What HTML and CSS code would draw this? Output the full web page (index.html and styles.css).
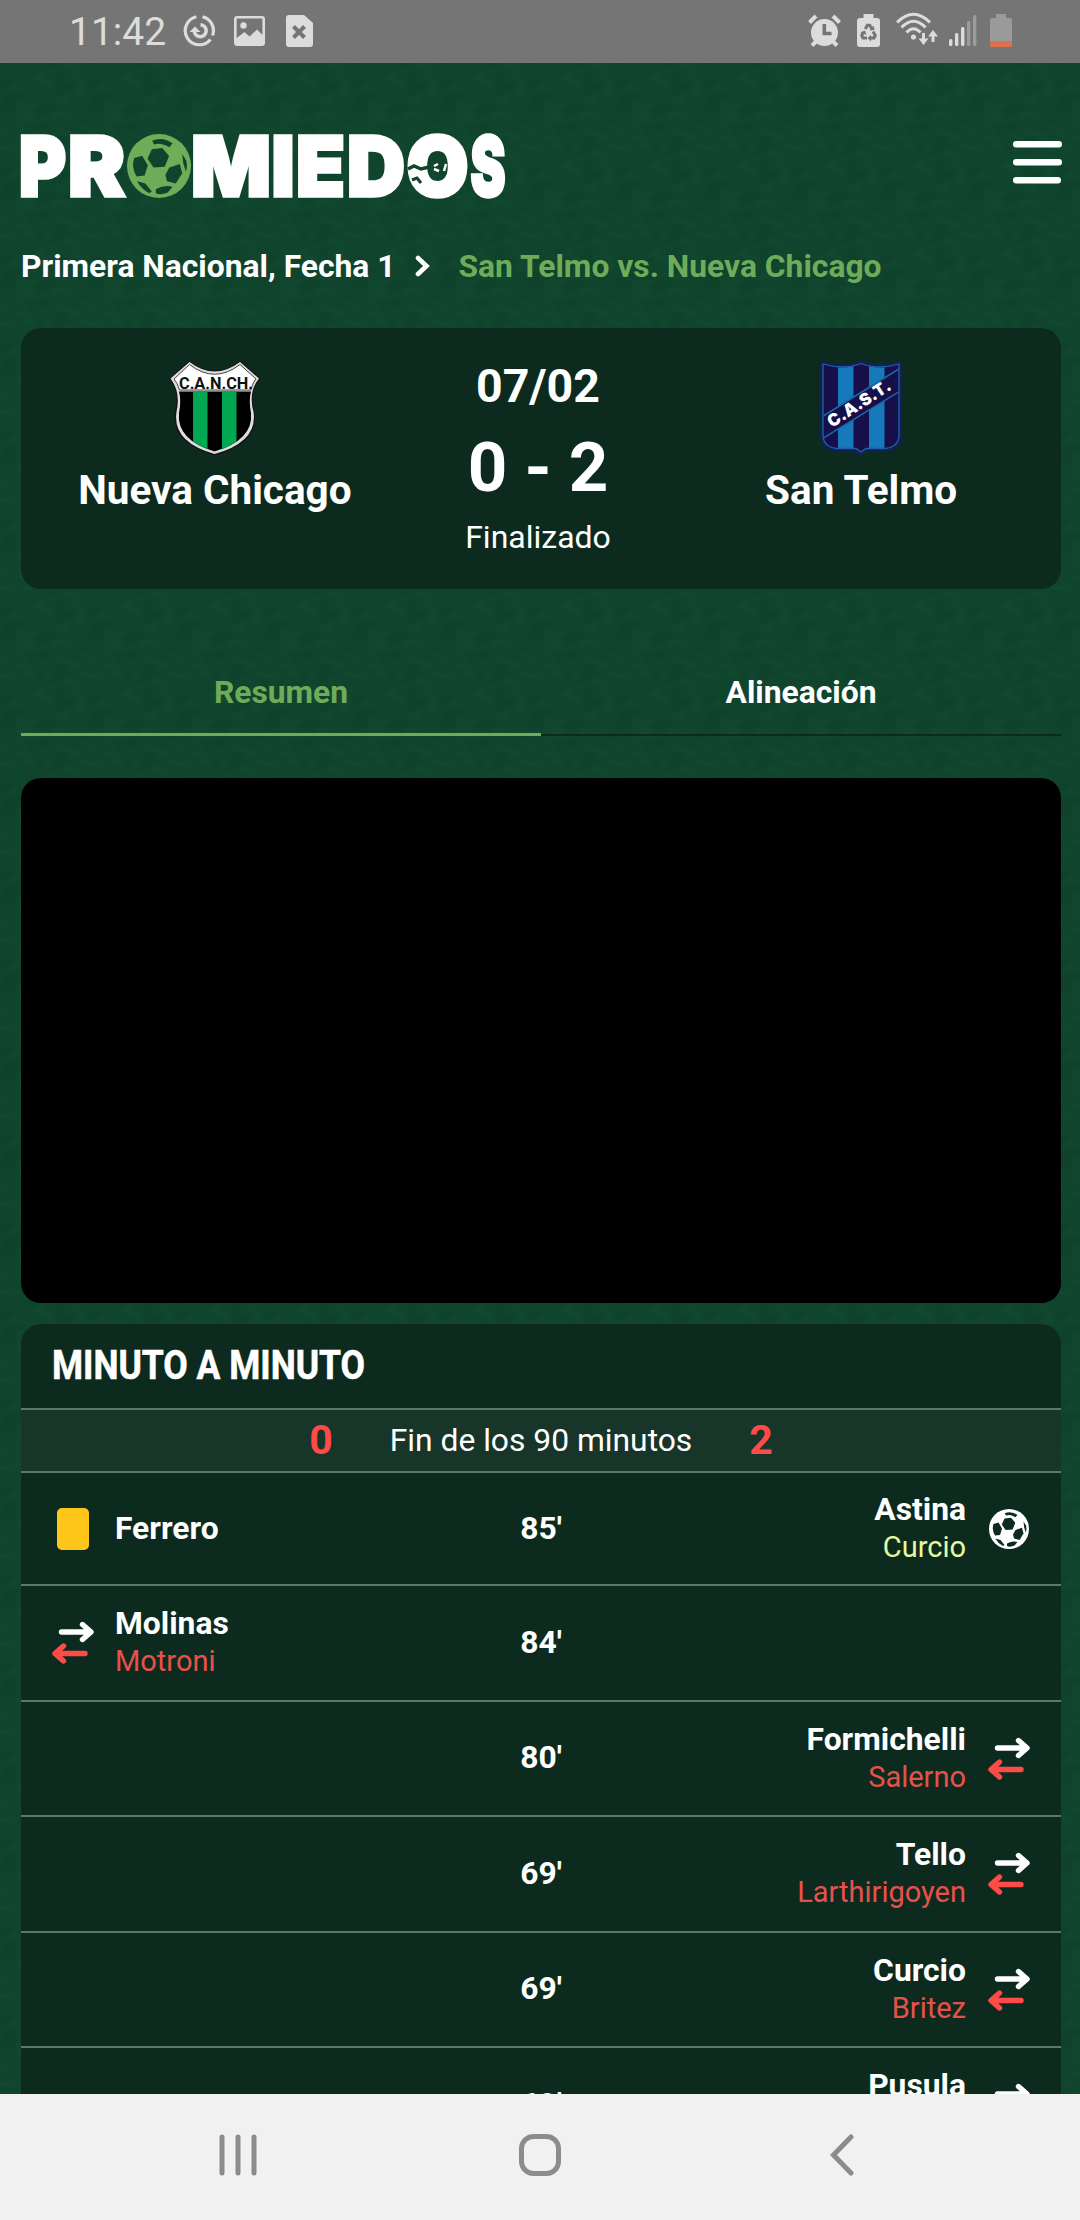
FILE: index.html
```html
<!DOCTYPE html>
<html lang="es">
<head>
<meta charset="utf-8">
<title>San Telmo vs. Nueva Chicago</title>
<link rel="stylesheet" href="styles.css">
</head>
<body>
<svg class="defs" width="0" height="0">
  <symbol id="ball" viewBox="0 0 40 40">
    <circle cx="20" cy="20" r="20" fill="currentColor"/>
    <g fill="var(--hole)">
      <path d="M15.500 9.500L22 8.800 26.300 13.800 23.600 20.500 16.600 21 12.800 15.500z"/>
      <path d="M15.700 4.200Q22 1.500 28.500 5.800L26.500 8.300Q21 5 17 6.600z"/>
      <path d="M4.500 15L9.500 13.600 13 19.500 11 26 6 26.500Q2.500 21 4.500 15z"/>
      <path d="M26.500 21L33 18.800 34.500 24.500 30.500 31 25 29.500 24 25.500z"/>
      <path d="M6.300 29.500L11.500 31 15.500 36 14 37Q9 34.500 6.300 29.500z"/>
      <path d="M18 34.500Q23.500 31.500 28.500 33L25.500 36.500Q21 38.500 18 37z"/>
      <path d="M34.500 12.500L37 16.500Q38 20.500 36.800 23.500L35.200 18.500z"/>
    </g>
  </symbol>
  <symbol id="swap" viewBox="0 0 42 43">
    <g fill="none" stroke-width="5.400" stroke-linecap="round" stroke-linejoin="round">
      <path stroke="#fff" d="M9.500 11H37M30.500 3.500L39 11 30.500 18.500"/>
      <path stroke="#ff4b47" d="M33 32.500H5M11.500 25L3 32.500 11.500 40"/>
    </g>
  </symbol>
</svg>

<div class="status">
  <span class="clock">11:42</span>
  <svg class="st-sync" width="33" height="33" viewBox="0 0 33 33" fill="none" stroke="#dcdcdc">
    <path stroke-width="3.200" d="M13.400 2.700A14.200 14.200 0 1 0 27.500 25.500M19.500 2.700A14.200 14.200 0 0 1 29.500 21.500"/>
    <path stroke-width="3.600" d="M17.500 10.700A6 6 0 1 1 11.200 16.500"/>
    <path fill="#dcdcdc" stroke="none" d="M6.500 18L12 12.500 17.500 18z"/>
  </svg>
  <svg class="st-image" width="31" height="30" viewBox="0 0 31 30">
    <rect x="1.300" y="1.300" width="28.400" height="27.400" rx="2" fill="none" stroke="#dcdcdc" stroke-width="2.600"/>
    <circle cx="9.500" cy="9.500" r="3.200" fill="#dcdcdc"/>
    <path fill="#dcdcdc" d="M2 22.500L10.500 16 15.500 20.500 23 13.500 29 19.500V28H2z"/>
  </svg>
  <svg class="st-file" width="27" height="32" viewBox="0 0 27 32">
    <path fill="#dcdcdc" d="M3 0H18L27 8V29Q27 32 24 32H3Q0 32 0 29V3Q0 0 3 0z"/>
    <path d="M7.500 11.500L18.500 22.500M18.500 11.500L7.500 22.500" stroke="#757575" stroke-width="4"/>
  </svg>
  <div class="status-right">
    <svg width="33" height="33" viewBox="0 0 33 33">
      <circle cx="16.500" cy="18.500" r="13.500" fill="#dcdcdc"/>
      <path d="M1.500 8.500L8 2M31.500 8.500L25 2M4 31.500L8 27.500M29 31.500L25 27.500" stroke="#dcdcdc" stroke-width="4"/>
      <path d="M16.300 10V19.500H23.500" fill="none" stroke="#757575" stroke-width="3.600"/>
    </svg>
    <svg class="st-recycle" width="23" height="33" viewBox="0 0 23 33">
      <path fill="#dcdcdc" d="M6.500 0H16.500V4H20Q23 4 23 7V30Q23 33 20 33H3Q0 33 0 30V7Q0 4 3 4H6.500z"/>
      <path d="M8.300 15L10.300 11.300H12.700L15 15M16 17.500L18.300 21.500 17 24H13M10 24H6L4.700 21.500 6.500 18" fill="none" stroke="#757575" stroke-width="3"/>
      <path d="M12.500 16.500L17.500 16 16.500 11.500zM14 21L10.500 24 14 27.500zM3.500 18.500L8 16.500 9.500 21z" fill="#757575"/>
    </svg>
    <svg class="st-wifi" width="42" height="34" viewBox="0 0 42 34" fill="none" stroke="#dcdcdc">
      <path stroke-width="3" d="M1 10.500Q17.500-6 34 10.500M5.500 15.500Q17.500 3 29.500 15.500M10.500 20.500Q17.500 13 24.500 20.500"/>
      <circle cx="17.500" cy="25" r="2.600" fill="#dcdcdc" stroke="none"/>
      <path stroke-width="3" d="M27.500 21V30M37 30V20"/>
      <path fill="#dcdcdc" stroke="none" d="M22.500 26.500H32.500L27.500 33zM32 24.500H42L37 18z"/>
    </svg>
    <svg class="st-signal" width="28" height="31" viewBox="0 0 28 31">
      <g fill="#dcdcdc"><rect y="24" width="3.400" height="7" rx="1.500"/><rect x="6" y="18" width="3.400" height="13" rx="1.500"/><rect x="12" y="12" width="3.400" height="19" rx="1.500"/></g>
      <g fill="#9c9c9c"><rect x="18" y="6" width="3.400" height="25" rx="1.500"/><rect x="24" width="3.400" height="31" rx="1.500"/></g>
    </svg>
    <svg class="st-battery" width="22" height="33" viewBox="0 0 22 33">
      <path fill="#9a9a9a" d="M6 0H16V4H20Q22 4 22 6V31Q22 33 20 33H2Q0 33 0 31V6Q0 4 2 4H6z"/>
      <path fill="#dd714e" d="M0 27H22V31Q22 33 20 33H2Q0 33 0 31z"/>
    </svg>
  </div>
</div>

<main class="page">
  <header class="top">
    <svg class="logo" width="484" height="66" viewBox="0 0 484 66" aria-label="Promiedos">
      <g class="logo-text">
        <text x="-2" y="62" textLength="47" lengthAdjust="spacingAndGlyphs">P</text>
        <text x="47" y="62" textLength="57" lengthAdjust="spacingAndGlyphs">R</text>
        <text x="170" y="62" textLength="80" lengthAdjust="spacingAndGlyphs">M</text>
        <text x="250.500" y="62" textLength="23" lengthAdjust="spacingAndGlyphs">I</text>
        <text x="275" y="62" textLength="49" lengthAdjust="spacingAndGlyphs">E</text>
        <text x="326" y="62" textLength="58" lengthAdjust="spacingAndGlyphs">D</text>
        <text x="385.500" y="62" textLength="62" lengthAdjust="spacingAndGlyphs">O</text>
        <text x="449.500" y="62" textLength="35" lengthAdjust="spacingAndGlyphs">S</text>
      </g>
      <use href="#ball" class="logo-ball" x="106" y="0" width="64" height="64"/>
      <path d="M387 35L393 32 400 35 408 33" fill="none" stroke="#11452d" stroke-width="3.500"/>
      <path d="M391 46L396 44 400 49" fill="none" stroke="#11452d" stroke-width="3"/>
      <path d="M413 32L417 30M413 35L418 37M425 30L423 37" fill="none" stroke="#fff" stroke-width="2.500"/>
    </svg>
    <svg width="49" height="44" viewBox="0 0 49 44" fill="#fff">
      <rect width="49" height="6.500" rx="3.200"/><rect y="18" width="49" height="6.500" rx="3.200"/><rect y="36" width="48" height="6.500" rx="3.200"/>
    </svg>
  </header>

  <nav class="crumbs">
    <span>Primera Nacional, Fecha 1</span>
    <svg width="16" height="22" viewBox="0 0 16 22"><path d="M3 3L11.500 11 3 19" fill="none" stroke="#fff" stroke-width="4.600" stroke-linecap="round"/></svg>
    <span class="current">San Telmo vs. Nueva Chicago</span>
  </nav>

  <section class="match">
    <div class="team">
      <svg width="92" height="96" viewBox="0 0 92 96">
        <path d="M20.500 1Q45.500 20 71 1L91.500 18.500Q80 32 85.500 52 91 83 45.500 95.500 1 83 6 52 11 32 0 18.500z" fill="#151515"/>
        <path d="M20.500 2Q45.500 21 71 2L90 18.500Q79 32 84.500 52 89 82 45.500 94 3 82 7.500 52 12 32 1.500 18.500z" fill="#dedede"/>
        <path d="M20.500 4.500Q45.500 24 71 4.500L87 19Q84 22 82 29V30H10.500Q8.500 23 5 19z" fill="#fff" stroke="#444" stroke-width="1"/>
        <path d="M10 31.500H82Q79.500 40 82 53 84.500 80 45.500 91.500 7.500 80 10 53 12.500 40 10 31.500z" fill="#000"/>
        <path d="M24 32H38.500V89Q30 86 24 81.500zM53 32H67.500V81.500Q61 86 53 89.500z" fill="#00a651"/>
        <text x="10" y="28.500" class="crest-chicago" textLength="74" lengthAdjust="spacingAndGlyphs">C.A.N.CH.</text>
      </svg>
      <h2>Nueva Chicago</h2>
    </div>
    <div class="result">
      <div class="date">07/02</div>
      <div class="score">0 - 2</div>
      <div class="state">Finalizado</div>
    </div>
    <div class="team">
      <svg width="82" height="96" viewBox="0 0 82 96">
        <clipPath id="telmo"><path d="M2 3Q24 9 41 2 58 9 80 3V76Q79 90 62 90H47L41 94 35 90H20Q3 90 2 76z"/></clipPath>
        <g clip-path="url(#telmo)">
          <path fill="#160f49" d="M0 0H82V96H0z"/>
          <path fill="#1579ba" d="M18 0H33.500V96H18zM49 0H64.500V96H49z"/>
          <path d="M0 58L82 7V30L0 80z" fill="#160f49" stroke="#1b66a8" stroke-width="1.500"/>
        </g>
        <path d="M2 3Q24 9 41 2 58 9 80 3V76Q79 90 62 90H47L41 94 35 90H20Q3 90 2 76z" fill="none" stroke="#112057" stroke-width="3.500"/>
        <path d="M3 4Q24 10 41 3.500 58 10 79 4V76Q78 88.500 62 88.500H46L41 92 36 88.500H20Q4 88.500 3 76z" fill="none" stroke="#1d62a6" stroke-width="1.300"/>
        <text x="12" y="68" class="crest-telmo" transform="rotate(-33 12 68)" textLength="72" lengthAdjust="spacingAndGlyphs">C.A.S.T.</text>
      </svg>
      <h2>San Telmo</h2>
    </div>
  </section>

  <nav class="tabs">
    <span class="tab active">Resumen</span>
    <span class="tab">Alineación</span>
  </nav>

  <div class="video"></div>

  <section class="panel">
    <h3><span>MINUTO A MINUTO</span></h3>
    <div class="period"><b>0</b><span>Fin de los 90 minutos</span><b>2</b></div>
    <div class="event short">
      <div class="side"><i class="icon"><span class="yellow"></span></i><div class="names"><b>Ferrero</b></div></div>
      <b class="minute">85'</b>
      <div class="side away"><div class="names"><b>Astina</b><span class="assist">Curcio</span></div><i class="icon"><svg class="goal" width="40" height="40"><use href="#ball"/></svg></i></div>
    </div>
    <div class="event">
      <div class="side"><i class="icon"><svg width="42" height="43"><use href="#swap"/></svg></i><div class="names"><b>Molinas</b><span class="out">Motroni</span></div></div>
      <b class="minute">84'</b>
      <div class="side away"></div>
    </div>
    <div class="event">
      <div class="side"></div>
      <b class="minute">80'</b>
      <div class="side away"><div class="names"><b>Formichelli</b><span class="out">Salerno</span></div><i class="icon"><svg width="42" height="43"><use href="#swap"/></svg></i></div>
    </div>
    <div class="event">
      <div class="side"></div>
      <b class="minute">69'</b>
      <div class="side away"><div class="names"><b>Tello</b><span class="out">Larthirigoyen</span></div><i class="icon"><svg width="42" height="43"><use href="#swap"/></svg></i></div>
    </div>
    <div class="event">
      <div class="side"></div>
      <b class="minute">69'</b>
      <div class="side away"><div class="names"><b>Curcio</b><span class="out">Britez</span></div><i class="icon"><svg width="42" height="43"><use href="#swap"/></svg></i></div>
    </div>
    <div class="event">
      <div class="side"></div>
      <b class="minute">69'</b>
      <div class="side away"><div class="names"><b>Pusula</b><span class="out">&nbsp;</span></div><i class="icon"><svg width="42" height="43"><use href="#swap"/></svg></i></div>
    </div>
  </section>
</main>

<footer class="navbar">
  <svg width="42" height="42" viewBox="0 0 42 42"><path d="M5 3V39M21 3V39M37 3V39" stroke="#8c8c8c" stroke-width="5" stroke-linecap="round"/></svg>
  <svg width="42" height="42" viewBox="0 0 42 42"><rect x="2.500" y="2.500" width="37" height="37" rx="12" fill="none" stroke="#8c8c8c" stroke-width="5"/></svg>
  <svg width="42" height="42" viewBox="0 0 42 42"><path d="M30 3L12.500 21 30 39" fill="none" stroke="#8c8c8c" stroke-width="5" stroke-linecap="round"/></svg>
</footer>
</body>
</html>
```
FILE: styles.css
```css
* { box-sizing: border-box; }
body {
  margin: 0;
  width: 1080px;
  height: 2220px;
  overflow: hidden;
  display: flex;
  flex-direction: column;
  font-family: Roboto, "Liberation Sans", sans-serif;
  font-size: 31.8px;
  color: #fff;
  background: #10442c;
}
svg { display: block; flex: none; }
.defs { position: absolute; }
h2, h3 { margin: 0; }

.status {
  flex: none;
  height: 63px;
  display: flex;
  align-items: center;
  padding: 0 68px 2px 69px;
  background: #757575;
}
.clock { width: 114px; font-size: 39px; line-height: 60px; color: #dcdcdc; padding-top: 3px; }
.st-image { margin-left: 18px; }
.st-file { margin-left: 21px; }
.status-right { margin-left: auto; display: flex; align-items: center; }
.st-recycle { margin-left: 16px; }
.st-wifi { margin: -3px 0 0 16px; }
.st-signal { margin-left: 11px; }
.st-battery { margin-left: 13px; }

.page {
  flex: 1;
  min-height: 0;
  overflow: hidden;
  padding: 0 19px 0 21px;
  background:
    url("data:image/svg+xml,%3Csvg xmlns='http://www.w3.org/2000/svg' width='88' height='88'%3E%3Cfilter id='n' x='0' y='0' width='1' height='1' color-interpolation-filters='sRGB'%3E%3CfeTurbulence type='fractalNoise' baseFrequency='.06 .1' numOctaves='3' stitchTiles='stitch'/%3E%3CfeColorMatrix values='0 0 0 0 .05 0 0 0 0 .22 0 0 0 0 .15 .9 0 0 0 -.25'/%3E%3C/filter%3E%3Crect width='88' height='88' filter='url(%23n)'/%3E%3C/svg%3E"),
    #11482f;
}

.top {
  display: flex;
  justify-content: space-between;
  align-items: flex-start;
  padding: 71px 0 0;
  height: 171px;
}
.top > svg:last-child { margin-top: 7px; margin-right: -1px; }
.logo { overflow: visible; }
.logo-text { font: 900 83px Inter, sans-serif; fill: #fff; stroke: #fff; stroke-width: 3.500px; }
.logo-ball { color: #70ad59; --hole: #10442c; }

.crumbs { display: flex; align-items: center; height: 64px; font-weight: 700; white-space: nowrap; }
.crumbs svg { margin: 0 28px 0 19px; }
.current { color: #6fac5a; }

.match {
  display: grid;
  grid-template-columns: 3fr 2fr 3fr;
  height: 261px;
  margin-top: 30px;
  padding-right: 6px;
  border-radius: 20px;
  background: #0c2b1e;
  text-align: center;
}
.team { display: flex; flex-direction: column; align-items: center; padding-top: 32px; }
.team h2 { margin-top: 10px; font-size: 40.500px; line-height: 48px; }
.result { display: flex; flex-direction: column; padding-top: 30px; }
.date { font-size: 46.500px; line-height: 56px; font-weight: 700; }
.score { margin-top: 13px; font-size: 69px; line-height: 82px; font-weight: 700; }
.state { margin-top: 7px; font-size: 32px; line-height: 42px; }
.crest-chicago { font: 700 17px Roboto, sans-serif; fill: #111; }
.crest-telmo { font: 900 17px Inter, sans-serif; fill: #fff; }

.tabs { display: grid; grid-template-columns: 1fr 1fr; height: 86px; margin-top: 61px; }
.tab {
  display: flex;
  align-items: center;
  justify-content: center;
  font-weight: 700;
  border-bottom: 2px solid #0c2b1e;
}
.tab.active { color: #6fac5a; border-bottom: 3px solid #6fac5a; }

.video { height: 525px; margin-top: 42px; border-radius: 20px; background: #000; }

.panel { margin-top: 21px; border-radius: 20px 20px 0 0; background: #0c2b1e; }
.panel h3 { height: 84px; padding: 0 31px; font-size: 41px; line-height: 83px; }
.panel h3 span { display: inline-block; transform: scaleX(.865); transform-origin: left; -webkit-text-stroke: .6px #fff; }
.period {
  display: flex;
  align-items: center;
  justify-content: center;
  gap: 57px;
  height: 65px;
  padding-bottom: 1px;
  background: #183529;
  border: solid #5e766c;
  border-width: 2px 0;
}
.period b { color: #ff4b47; font-size: 41px; }
.event {
  display: grid;
  grid-template-columns: 1fr auto 1fr;
  align-items: center;
  height: 115.500px;
  padding: 0 31px;
  border-bottom: 2px solid #5e766c;
}
.event.short { height: 113px; }
.minute { padding-bottom: 2px; }
.side { display: flex; align-items: center; }
.away { justify-content: flex-end; text-align: right; }
.names { display: flex; flex-direction: column; line-height: 38px; padding-bottom: 1px; }
.names span { font-size: 29px; }
.icon { width: 42px; display: flex; justify-content: center; margin-right: 21px; }
.away .icon { margin: 0 0 0 22px; }
.yellow { width: 32px; height: 42px; border-radius: 5px; background: #ffc61a; }
.goal { color: #fff; --hole: #0c2b1e; }
.out { color: #e8514b; }
.assist { color: #e6f9a0; }

.navbar {
  flex: none;
  height: 126px;
  display: flex;
  align-items: center;
  justify-content: space-between;
  padding: 0 217px;
  padding-bottom: 4px;
  background: #f1f1f1;
}
```
